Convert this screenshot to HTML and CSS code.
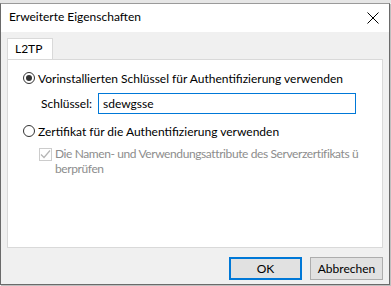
FILE: index.html
```html
<!DOCTYPE html>
<html lang="de">
<head>
  <meta charset="UTF-8" />
  <title>Erweiterte Eigenschaften</title>
  <link rel="stylesheet" href="styles.css">
</head>
<body>
  <div class="behind"></div>
  <div class="dialog">
    <div class="titlebar">
      <span class="title">Erweiterte Eigenschaften</span>
      <svg class="close" width="12" height="12" viewBox="0 0 12 12">
        <path d="M0.5 0.5 L11.5 11.5 M11.5 0.5 L0.5 11.5" stroke="#000" stroke-width="1" fill="none"/>
      </svg>
    </div>
    <div class="client">
      <div class="tabs">
        <div class="tab">L2TP</div>
      </div>
      <div class="panel">
        <label class="option">
          <span class="radio checked"></span>
          Vorinstallierten Schlüssel für Authentifizierung verwenden
        </label>
        <div class="keyrow">
          <span class="keylabel">Schlüssel:</span>
          <div class="input">sdewgsse</div>
        </div>
        <label class="option">
          <span class="radio"></span>
          Zertifikat für die Authentifizierung verwenden
        </label>
        <div class="check disabled">
          <span class="box">
            <svg width="11" height="11" viewBox="0 0 11 11">
              <path d="M1 5.5 L4 8.5 L10 1.5" stroke="#b5b5b5" stroke-width="1.2" fill="none"/>
            </svg>
          </span>
          <span class="checktext">Die Namen- und Verwendungsattribute des Serverzertifikats ü<br>berprüfen</span>
        </div>
      </div>
      <div class="buttons">
        <button class="btn default">OK</button>
        <button class="btn">Abbrechen</button>
      </div>
    </div>
  </div>
</body>
</html>
```

FILE: styles.css
```css
html, body {
  margin: 0;
  padding: 0;
}
body {
  background: #fff;
  font-family: "Segoe UI", Lato, sans-serif;
  font-size: 12px;
  color: #000;
  width: 391px;
  height: 286px;
  overflow: hidden;
}
.behind {
  height: 3px;
  background: #e6e6e6;
}
.dialog {
  width: 388px;
  height: 280px;
  border: 1px solid #6a6a6a;
  border-top-color: #9a9a9a;
  display: flex;
  flex-direction: column;
  box-shadow: 1px 1px 1px rgba(0, 0, 0, 0.25);
}
.titlebar {
  height: 28px;
  box-sizing: border-box;
  background: #fff;
  display: flex;
  align-items: flex-start;
  justify-content: space-between;
  padding: 5px 10px 0 8px;
}
.title {
  font-size: 12px;
}
.close {
  display: block;
  margin-top: 3px;
}
.client {
  flex: 1;
  background: #f0f0f0;
  padding: 6px 6px 0 6px;
  display: flex;
  flex-direction: column;
}
.tabs {
  display: flex;
  height: 21px;
}
.tab {
  width: 46px;
  height: 21px;
  box-sizing: border-box;
  background: #fff;
  border: 1px solid #d9d9d9;
  border-bottom: none;
  padding: 2px 0 0 7px;
  margin-bottom: -1px;
  position: relative;
  z-index: 1;
}
.panel {
  height: 189px;
  box-sizing: border-box;
  background: #fff;
  border: 1px solid #d9d9d9;
  padding: 10px 0 0 15px;
  white-space: nowrap;
}
.option {
  display: flex;
  align-items: center;
  gap: 3px;
  height: 16px;
}
.radio {
  width: 12px;
  height: 12px;
  border: 1px solid #333;
  border-radius: 50%;
  box-sizing: border-box;
  display: inline-flex;
  align-items: center;
  justify-content: center;
}
.radio.checked::after {
  content: "";
  width: 6px;
  height: 6px;
  border-radius: 50%;
  background: #333;
}
.keyrow {
  display: flex;
  align-items: center;
  margin: 7px 0 9px 18px;
}
.keylabel {
  width: 57px;
}
.input {
  width: 258px;
  height: 21px;
  box-sizing: border-box;
  border: 1px solid #0078d7;
  padding: 1px 0 0 4px;
  font-size: 12px;
  line-height: 17px;
}
.check {
  display: flex;
  align-items: flex-start;
  margin: 7px 0 0 16px;
  color: #8d8d8d;
}
.box {
  width: 13px;
  height: 13px;
  box-sizing: border-box;
  border: 1px solid #cccccc;
  display: inline-flex;
  align-items: center;
  justify-content: center;
  margin: 2px 3px 0 0;
}
.checktext {
  line-height: 15px;
  letter-spacing: -0.4px;
}
.buttons {
  display: flex;
  justify-content: flex-end;
  gap: 8px;
  padding: 9px 0 0 0;
}
.btn {
  width: 73px;
  height: 23px;
  font-family: "Segoe UI", Lato, sans-serif;
  font-size: 12px;
  background: #e1e1e1;
  border: 1px solid #adadad;
  padding: 0;
  color: #000;
}
.btn.default {
  border: 2px solid #0078d7;
}
```
